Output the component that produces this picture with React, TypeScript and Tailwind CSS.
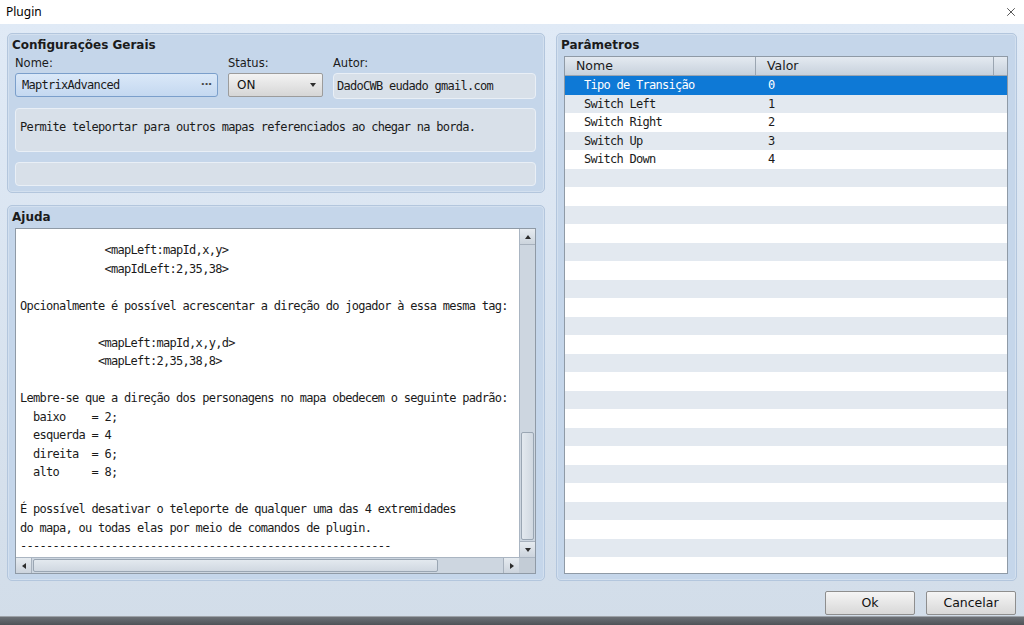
import { X } from "lucide-react";

const mono = "font-['DejaVu_Sans_Mono',monospace] text-[12px] tracking-[-0.72px]";
const sans = "font-['DejaVu_Sans',sans-serif]";

const helpLines = [
  "             <mapLeft:mapId,x,y>",
  "             <mapIdLeft:2,35,38>",
  "",
  "Opcionalmente é possível acrescentar a direção do jogador à essa mesma tag:",
  "",
  "            <mapLeft:mapId,x,y,d>",
  "            <mapLeft:2,35,38,8>",
  "",
  "Lembre-se que a direção dos personagens no mapa obedecem o seguinte padrão:",
  "  baixo    = 2;",
  "  esquerda = 4",
  "  direita  = 6;",
  "  alto     = 8;",
  "",
  "É possível desativar o teleporte de qualquer uma das 4 extremidades",
  "do mapa, ou todas elas por meio de comandos de plugin.",
  "---------------------------------------------------------",
];

const params = [
  { name: "Tipo de Transição", value: "0" },
  { name: "Switch Left", value: "1" },
  { name: "Switch Right", value: "2" },
  { name: "Switch Up", value: "3" },
  { name: "Switch Down", value: "4" },
];

function Panel({ title, className, children }: { title: string; className?: string; children: React.ReactNode }) {
  return (
    <div
      className={`flex flex-col rounded-[5px] border border-[#b3c6dd] bg-[#c5d6ea] shadow-[inset_0_0_0_1px_#d3e0ef] pl-[7px] pr-2 pb-[6px] ${className ?? ""}`}
    >
      <div className={`${sans} text-[12px] font-bold text-[#1b1b1b] h-[22px] leading-[22px] -ml-[3px]`}>{title}</div>
      {children}
    </div>
  );
}

function Arrow({ dir }: { dir: "up" | "down" | "left" | "right" }) {
  const pts = {
    up: "1,6 4,2 7,6",
    down: "1,2 4,6 7,2",
    left: "6,1 2,4 6,7",
    right: "2,1 6,4 2,7",
  }[dir];
  return (
    <svg width="8" height="8" viewBox="0 0 8 8">
      <polygon points={pts} fill="#2d2d2d" />
    </svg>
  );
}

export default function App() {
  const rows = Array.from({ length: 28 }, (_, i) => params[i]);

  return (
    <div className="w-[1024px] h-[625px] flex flex-col overflow-hidden bg-white">
      {/* Title bar */}
      <div className="h-[24px] flex items-center justify-between pl-[6px] pr-[6px] bg-white">
        <span className="font-['Noto_Sans',sans-serif] text-[12px] text-black">Plugin</span>
        <X className="w-[14px] h-[14px] text-[#222]" strokeWidth={1.3} />
      </div>

      {/* Body */}
      <div className="flex-1 flex flex-col bg-gradient-to-b from-[#e0eaf6] to-[#d2dde9]">
        <div className="flex gap-[11px] pt-[9px] pl-[7px] pr-[7px]">
          {/* Left column */}
          <div className="w-[538px] flex flex-col gap-[12px]">
            <Panel title="Configurações Gerais" className="h-[160px]">
              <div className="flex gap-[10px]">
                <div className="flex flex-col w-[203px]">
                  <span className={`${sans} text-[11.5px] text-[#1b1b1b] leading-[14px] mb-[3px]`}>Nome:</span>
                  <div className="h-[24px] flex items-center justify-between rounded-[3px] border border-[#7b9fcb] bg-gradient-to-b from-[#dae8f8] to-[#c4d8f0] pl-[6px] pr-[5px]">
                    <span className={`${mono} text-[#1a1a1a]`}>MaptrixAdvanced</span>
                    <span className="text-[13px] font-bold text-[#444] leading-none -mt-[3px]">···</span>
                  </div>
                </div>
                <div className="flex flex-col w-[95px]">
                  <span className={`${sans} text-[11.5px] text-[#1b1b1b] leading-[14px] mb-[3px]`}>Status:</span>
                  <div className="h-[24px] flex items-center justify-between rounded-[2px] border border-[#9c9c9c] bg-gradient-to-b from-[#f3f3f3] to-[#d6d6d6] pl-[8px] pr-[5px]">
                    <span className={`${sans} text-[12px] text-[#111]`}>ON</span>
                    <Arrow dir="down" />
                  </div>
                </div>
                <div className="flex flex-col flex-1">
                  <span className={`${sans} text-[11.5px] text-[#1b1b1b] leading-[14px] mb-[3px]`}>Autor:</span>
                  <div className="h-[26px] flex items-center rounded-[4px] border border-[#e9eff6] bg-[#d8e0e9] pl-[3px]">
                    <span className={`${mono} text-[#1a1a1a]`}>DadoCWB eudado gmail.com</span>
                  </div>
                </div>
              </div>
              <div className="mt-[9px] h-[46px] rounded-[4px] border border-[#e9eff6] bg-[#d8e0e9] pl-[4px] pt-[4px]">
                <span className={`${mono} text-[#1a1a1a]`}>Permite teleportar para outros mapas referenciados ao chegar na borda.</span>
              </div>
              <div className="mt-[10px] h-[26px] rounded-[4px] border border-[#e9eff6] bg-[#d8e0e9]" />
            </Panel>

            <Panel title="Ajuda" className="h-[376px]">
              <div className="flex-1 flex flex-col border border-[#8f9aa6] bg-white overflow-hidden">
                <div className="flex-1 flex min-h-0">
                  <pre className={`${mono} flex-1 leading-[18.5px] text-[#1a1a1a] pl-[4px] pt-[12px] overflow-hidden whitespace-pre`}>
                    {helpLines.join("\n")}
                  </pre>
                  {/* vertical scrollbar */}
                  <div className="w-[16px] flex flex-col bg-[#cdd6e0] border-l border-[#aab5c2]">
                    <div className="h-[16px] flex items-center justify-center bg-gradient-to-b from-[#e6ebf0] to-[#ccd4dd] border-b border-[#a7b1bd]">
                      <Arrow dir="up" />
                    </div>
                    <div className="flex-1 flex flex-col justify-end pb-[1px]">
                      <div className="h-[108px] mx-[1px] rounded-[2px] border border-[#9aa6b3] bg-gradient-to-r from-[#e3e9ef] to-[#d0d8e1]" />
                    </div>
                    <div className="h-[16px] flex items-center justify-center bg-gradient-to-b from-[#e6ebf0] to-[#ccd4dd] border-t border-[#a7b1bd]">
                      <Arrow dir="down" />
                    </div>
                  </div>
                </div>
                {/* horizontal scrollbar */}
                <div className="h-[16px] flex bg-[#cdd6e0] border-t border-[#aab5c2]">
                  <div className="w-[16px] flex items-center justify-center bg-gradient-to-b from-[#e6ebf0] to-[#ccd4dd] border-r border-[#a7b1bd]">
                    <Arrow dir="left" />
                  </div>
                  <div className="flex-1 flex items-center pl-[1px]">
                    <div className="w-[405px] h-[13px] rounded-[2px] border border-[#9aa6b3] bg-gradient-to-b from-[#e3e9ef] to-[#d0d8e1]" />
                  </div>
                  <div className="w-[16px] flex items-center justify-center bg-gradient-to-b from-[#e6ebf0] to-[#ccd4dd] border-l border-[#a7b1bd]">
                    <Arrow dir="right" />
                  </div>
                  <div className="w-[16px] bg-[#c3ccd6]" />
                </div>
              </div>
            </Panel>
          </div>

          {/* Right column */}
          <Panel title="Parâmetros" className="w-[461px] h-[548px]">
            <div className="flex-1 flex flex-col border border-[#8f9aa6] bg-white overflow-hidden">
              <div className="h-[19px] flex shrink-0 bg-gradient-to-b from-[#e4eaf1] to-[#c7d1dc] border-b border-[#9aa5b1]">
                <div className={`${sans} w-[191px] border-r border-[#9aa5b1] pl-[11px] text-[12.5px] leading-[18px] text-[#1a1a1a]`}>Nome</div>
                <div className={`${sans} w-[238px] border-r border-[#9aa5b1] pl-[11px] text-[12.5px] leading-[18px] text-[#1a1a1a]`}>Valor</div>
                <div className="flex-1" />
              </div>
              <div className="flex-1 flex flex-col overflow-hidden">
                {rows.map((r, i) => {
                  const selected = i === 0;
                  const bg = selected ? "bg-[#0e79d6] text-white" : i % 2 === 1 ? "bg-[#e3e9f0] text-[#1a1a1a]" : "bg-white text-[#1a1a1a]";
                  return (
                    <div key={i} className={`h-[18.5px] shrink-0 flex items-center ${bg}`}>
                      <div className={`${mono} w-[191px] pl-[19px]`}>{r?.name}</div>
                      <div className={`${mono} pl-[12px]`}>{r?.value}</div>
                    </div>
                  );
                })}
              </div>
            </div>
          </Panel>
        </div>

        {/* Buttons */}
        <div className="flex justify-end gap-[11px] pr-[8px] pt-[10px]">
          {["Ok", "Cancelar"].map((label) => (
            <button
              key={label}
              className={`${sans} w-[90px] h-[24px] rounded-[2px] border border-[#8e8e8e] bg-gradient-to-b from-[#f5f5f5] to-[#d8d8d8] text-[12.5px] text-[#111]`}
            >
              {label}
            </button>
          ))}
        </div>
        <div className="flex-1" />
        <div className="h-[9px] bg-gradient-to-b from-[#6d7177] to-[#4f5358] border-t border-[#9da2a8]" />
      </div>
    </div>
  );
}
